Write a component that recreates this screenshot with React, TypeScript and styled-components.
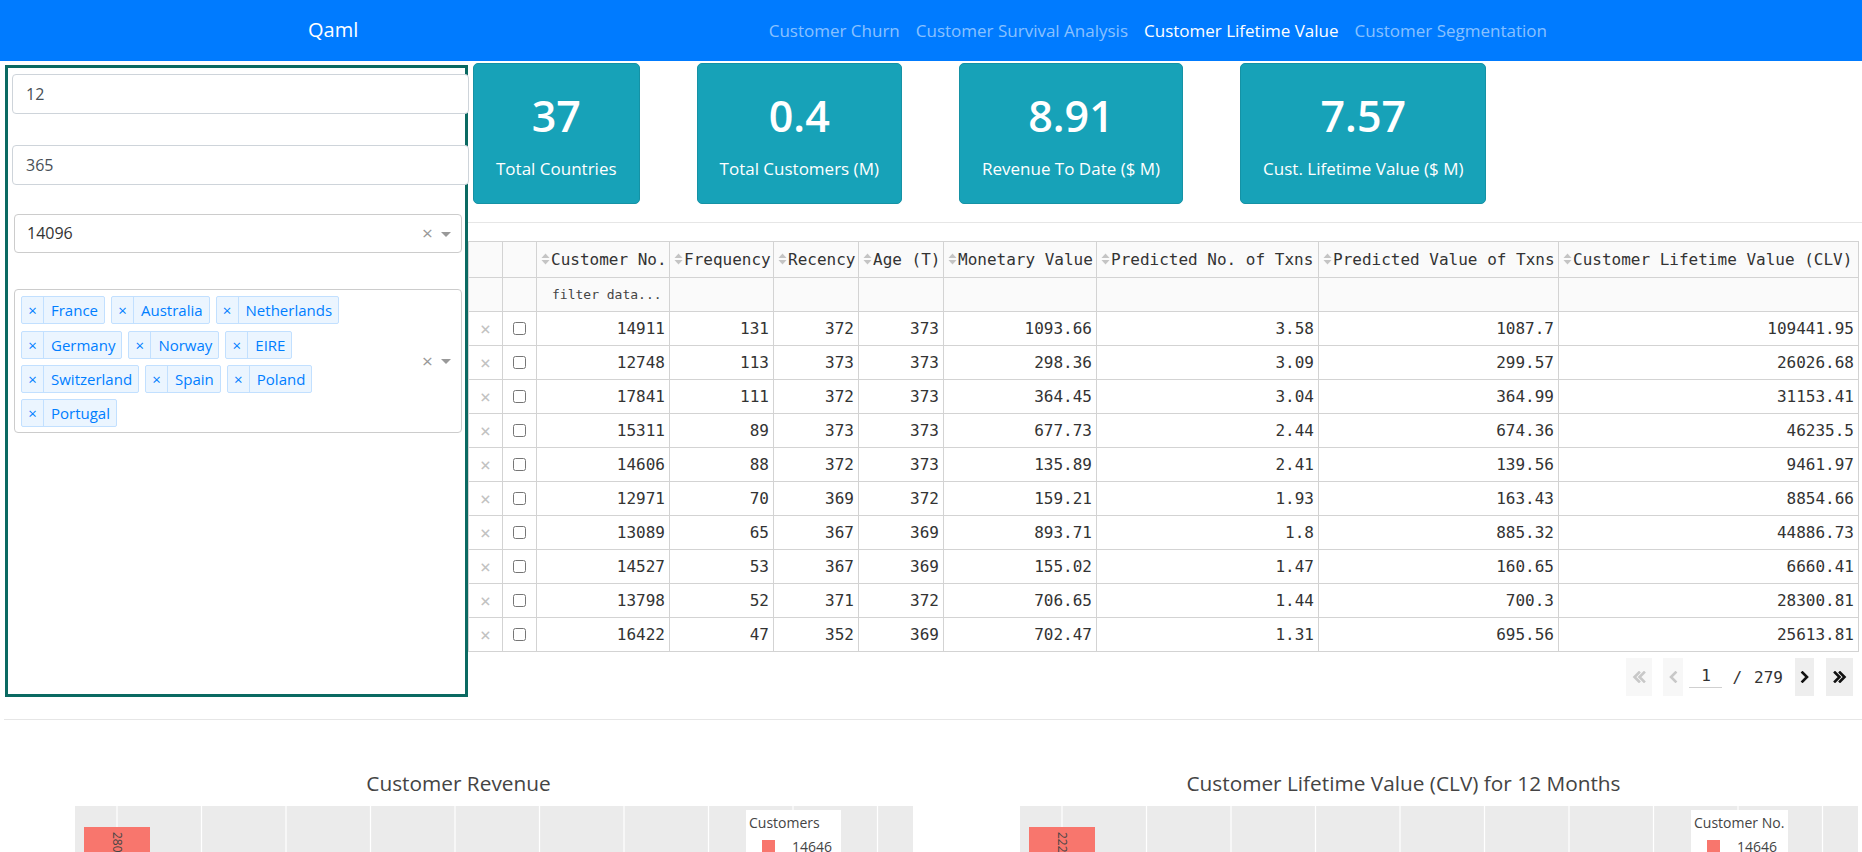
import React from 'react';
import styled, {createGlobalStyle} from 'styled-components';

const sansStack = '"Open Sans", "Noto Sans", "Liberation Sans", sans-serif';
const monoStack = '"DejaVu Sans Mono", "Liberation Mono", monospace';

const GlobalStyle = createGlobalStyle`
  html, body {
    margin: 0;
    padding: 0;
  }
  body {
    font-family: ${sansStack};
    color: #212529;
    background: #fff;
  }
  * {
    box-sizing: border-box;
  }
`;

const Page = styled.div`
  height: 100vh;
  overflow: hidden;
`;

// ---------- navbar ----------

const NavBar = styled.nav`
  height: 61px;
  background: #007bff;
  display: flex;
  align-items: center;
  justify-content: space-between;
  padding: 0 308px;
`;

const Brand = styled.div`
  color: #fff;
  font-size: 20px;
  margin-top: -2px;
`;

const NavLinks = styled.div`
  display: flex;
  margin-right: -1px;
`;

const NavLink = styled.a<{active?: boolean}>`
  padding: 0 8px;
  font-size: 17px;
  color: ${props => props.active ? '#fff' : 'rgba(255, 255, 255, 0.55)'};
  text-decoration: none;
  cursor: pointer;
`;

// ---------- top row ----------

const TopRow = styled.div`
  display: flex;
  align-items: flex-start;
`;

// inputs are a bit wider than the panel and run over its right border, as in the app
const FilterPanel = styled.aside`
  flex: 0 0 463px;
  min-width: 0;
  height: 632px;
  margin: 4px 0 0 5px;
  border: 3px solid #0b6a62;
`;

const TextInput = styled.input<{gap: number}>`
  display: block;
  width: 457px;
  height: 40px;
  margin: ${props => props.gap}px 0 0 4px;
  padding: 0 13px;
  font-family: ${sansStack};
  font-size: 16px;
  color: #495057;
  background: #fff;
  border: 1px solid #ced4da;
  border-radius: 4px;
  outline: none;
`;

const SelectBox = styled.div<{gap: number}>`
  margin: ${props => props.gap}px 0 0 6px;
  width: 448px;
  display: flex;
  align-items: center;
  border: 1px solid #ccc;
  border-radius: 4px;
  background: #fff;
  color: #333;
`;

const SingleValue = styled.div`
  flex: 1;
  height: 37px;
  line-height: 37px;
  padding-left: 12px;
  font-size: 16px;
`;

const TagArea = styled.div`
  width: 385px;
  display: flex;
  flex-wrap: wrap;
  padding-bottom: 5px;
`;

const Spacer = styled.div`
  flex: 1;
`;

const Tag = styled.div`
  display: flex;
  align-items: stretch;
  height: 28px;
  margin: 6.3px 0 0 6px;
  background: #ebf5ff;
  border: 1px solid #c2e0ff;
  border-radius: 2px;
  color: #007eff;
  font-size: 15px;
`;

const TagRemove = styled.span`
  width: 22px;
  display: flex;
  align-items: center;
  justify-content: center;
  border-right: 1px solid #c2e0ff;
  font-size: 15px;
`;

const TagLabel = styled.span`
  display: flex;
  align-items: center;
  padding: 0 6px 0 7px;
`;

const ClearZone = styled.span`
  width: 17px;
  text-align: center;
  color: #999;
  font-size: 19px;
  line-height: 1;
`;

const ArrowZone = styled.span`
  width: 25px;
  padding-right: 5px;
  display: flex;
  justify-content: center;
`;

const Caret = styled.span`
  width: 0;
  height: 0;
  border-style: solid;
  border-width: 5px 5px 2.5px;
  border-color: #999 transparent transparent;
  margin-top: 3px;
`;

// ---------- main content ----------

const Main = styled.main`
  flex: 1;
  min-width: 0;
`;

const CardRow = styled.div`
  display: flex;
  gap: 57px;
  margin: 2px 0 0 5px;
`;

const StatCard = styled.div`
  height: 141px;
  padding: 25px 22px 22px;
  background: #17a2b8;
  border: 1px solid #1592a5;
  border-radius: 5px;
  color: #fff;
  text-align: center;
`;

const StatValue = styled.div`
  font-size: 43px;
  line-height: 54px;
  font-weight: 600;
`;

const StatLabel = styled.div`
  margin-top: 14px;
  font-size: 17px;
  line-height: 24px;
  white-space: nowrap;
`;

const Divider = styled.hr<{top: number; left?: number}>`
  margin: ${props => props.top}px 0 0 ${props => props.left || 0}px;
  border: 0;
  border-top: 1px solid #e6e6e6;
`;

const DataTable = styled.table`
  margin-top: 18px;
  border-collapse: collapse;
  table-layout: fixed;
  font-family: ${monoStack};
  font-size: 16px;
  color: #333;
`;

const HeadCell = styled.th`
  height: 36px;
  padding: 0 2px 0 4px;
  background: #fafafa;
  border: 1px solid #d3d3d3;
  font-weight: normal;
  text-align: left;
  white-space: nowrap;
  overflow: hidden;
`;

const FilterCell = styled.td`
  height: 34px;
  padding: 0 0 0 15px;
  background: #fafafa;
  border: 1px solid #d3d3d3;
  font-size: 13px;
  color: #444;
  white-space: nowrap;
`;

const Cell = styled.td`
  height: 34px;
  padding: 0 4px 0 2px;
  border: 1px solid #d3d3d3;
  text-align: right;
  white-space: nowrap;
  overflow: hidden;
`;

const ControlCell = styled.td`
  height: 34px;
  padding: 0;
  border: 1px solid #d3d3d3;
  text-align: center;
  font-size: 18px;
  color: #c2c2c2;
`;

const RowCheck = styled.input`
  width: 13px;
  height: 13px;
  margin: 4px 0 0;
  vertical-align: top;
`;

const SortIcon = styled.svg`
  width: 9px;
  height: 14px;
  margin-right: 1px;
  vertical-align: -1px;
`;

const Pager = styled.div`
  display: flex;
  justify-content: flex-end;
  align-items: center;
  height: 38px;
  margin-top: 6px;
  padding-right: 9px;
  font-family: ${monoStack};
  font-size: 16px;
  color: #333;
`;

const PagerButton = styled.span<{width: number; gap: number; enabled?: boolean}>`
  width: ${props => props.width}px;
  height: 38px;
  margin-left: ${props => props.gap}px;
  display: flex;
  align-items: center;
  justify-content: center;
  background: ${props => props.enabled ? '#eeeeee' : '#f7f7f7'};
  color: ${props => props.enabled ? '#111' : '#c8c8c8'};
`;

const PageInput = styled.span`
  width: 33px;
  margin-left: 6px;
  padding-bottom: 2px;
  text-align: center;
  border-bottom: 1px solid #d0d0d0;
`;

const PageText = styled.span<{gap: number}>`
  margin-left: ${props => props.gap}px;
`;

// ---------- charts ----------

const ChartRow = styled.div`
  display: flex;
  justify-content: space-between;
`;

const ChartBox = styled.section`
  width: 917px;
`;

const ChartTitle = styled.div`
  margin-top: 50px;
  height: 26px;
  line-height: 26px;
  text-align: center;
  font-size: 20.8px;
  color: #444;
`;

const PlotArea = styled.div`
  position: relative;
  margin: 10px 0 0 75px;
  width: 838px;
  height: 420px;
`;

const Legend = styled.div<{width: number}>`
  position: absolute;
  top: 4px;
  left: 671px;
  width: ${props => props.width}px;
  height: 120px;
  background: #fff;
  padding: 3px 0 0 3px;
  font-size: 14px;
  color: #444;
`;

const LegendItem = styled.div`
  display: flex;
  align-items: center;
  margin-top: 5px;
  padding-left: 13px;
`;

const Swatch = styled.span`
  width: 13px;
  height: 14px;
  margin-right: 17px;
  background: #f8766d;
`;

const countries = ['France', 'Australia', 'Netherlands', 'Germany', 'Norway', 'EIRE', 'Switzerland', 'Spain', 'Poland', 'Portugal'];

const stats = [
  {value: '37', label: 'Total Countries'},
  {value: '0.4', label: 'Total Customers (M)'},
  {value: '8.91', label: 'Revenue To Date ($ M)'},
  {value: '7.57', label: 'Cust. Lifetime Value ($ M)'},
];

const columns = [
  {name: 'Customer No.', width: 133},
  {name: 'Frequency', width: 104},
  {name: 'Recency', width: 85},
  {name: 'Age (T)', width: 85},
  {name: 'Monetary Value', width: 153},
  {name: 'Predicted No. of Txns', width: 222},
  {name: 'Predicted Value of Txns', width: 240},
  {name: 'Customer Lifetime Value (CLV)', width: 300},
];

const rows = [
  ['14911', '131', '372', '373', '1093.66', '3.58', '1087.7', '109441.95'],
  ['12748', '113', '373', '373', '298.36', '3.09', '299.57', '26026.68'],
  ['17841', '111', '372', '373', '364.45', '3.04', '364.99', '31153.41'],
  ['15311', '89', '373', '373', '677.73', '2.44', '674.36', '46235.5'],
  ['14606', '88', '372', '373', '135.89', '2.41', '139.56', '9461.97'],
  ['12971', '70', '369', '372', '159.21', '1.93', '163.43', '8854.66'],
  ['13089', '65', '367', '369', '893.71', '1.8', '885.32', '44886.73'],
  ['14527', '53', '367', '369', '155.02', '1.47', '160.65', '6660.41'],
  ['13798', '52', '371', '372', '706.65', '1.44', '700.3', '28300.81'],
  ['16422', '47', '352', '369', '702.47', '1.31', '695.56', '25613.81'],
];

const Sort = () => (
  <SortIcon viewBox="0 0 9 14">
    <path d="M0.5 6 L4.5 1.5 L8.5 6 Z" fill="#c4c4c4" />
    <path d="M0.5 8 L4.5 12.5 L8.5 8 Z" fill="#c4c4c4" />
  </SortIcon>
);

const Chevron = ({double, dir}: {double?: boolean; dir: 'left' | 'right'}) => {
  const w = double ? 14 : 9;
  const left = double ? 'M7 1.5 L2.5 6 L7 10.5 M12 1.5 L7.5 6 L12 10.5' : 'M6.5 1.5 L2 6 L6.5 10.5';
  return (
    <svg width={w} height="12" viewBox={`0 0 ${w} 12`} style={dir === 'right' ? {transform: 'scaleX(-1)'} : undefined}>
      <path d={left} fill="none" stroke="currentColor" strokeWidth="2.6" strokeLinecap="square" />
    </svg>
  );
};

const Chart = ({title, legendTitle, legendWidth, barText}: {title: string; legendTitle: string; legendWidth: number; barText: string}) => {
  const grid = Array.from({length: 10}, (_, i) => 42 + i * 84.5);
  return (
    <ChartBox>
      <ChartTitle>{title}</ChartTitle>
      <PlotArea>
        <svg width="838" height="420" viewBox="0 0 838 420">
          <rect width="838" height="420" fill="#ebebeb" />
          {grid.map(x => <line key={x} x1={x} x2={x} y1="0" y2="420" stroke="#fff" strokeWidth="1.2" />)}
          <rect x="9" y="21" width="66" height="399" fill="#f8766d" />
          <text x="38" y="26" transform="rotate(90 38 26)" fontSize="12" fill="#444" fontFamily={sansStack}>{barText}</text>
        </svg>
        <Legend width={legendWidth}>
          <div>{legendTitle}</div>
          <LegendItem>
            <Swatch />
            14646
          </LegendItem>
        </Legend>
      </PlotArea>
    </ChartBox>
  );
};

const App: React.FC = () => (
  <Page>
    <GlobalStyle />
    <NavBar>
      <Brand>Qaml</Brand>
      <NavLinks>
        <NavLink>Customer Churn</NavLink>
        <NavLink>Customer Survival Analysis</NavLink>
        <NavLink active>Customer Lifetime Value</NavLink>
        <NavLink>Customer Segmentation</NavLink>
      </NavLinks>
    </NavBar>

    <TopRow>
      <FilterPanel>
        <TextInput gap={6} type="number" defaultValue="12" />
        <TextInput gap={31} type="number" defaultValue="365" />
        <SelectBox gap={29}>
          <SingleValue>14096</SingleValue>
          <ClearZone>×</ClearZone>
          <ArrowZone><Caret /></ArrowZone>
        </SelectBox>
        <SelectBox gap={36}>
          <TagArea>
            {countries.map(c => (
              <Tag key={c}>
                <TagRemove>×</TagRemove>
                <TagLabel>{c}</TagLabel>
              </Tag>
            ))}
          </TagArea>
          <Spacer />
          <ClearZone>×</ClearZone>
          <ArrowZone><Caret /></ArrowZone>
        </SelectBox>
      </FilterPanel>

      <Main>
        <CardRow>
          {stats.map(s => (
            <StatCard key={s.label}>
              <StatValue>{s.value}</StatValue>
              <StatLabel>{s.label}</StatLabel>
            </StatCard>
          ))}
        </CardRow>
        <Divider top={18} />

        <DataTable>
          <colgroup>
            <col style={{width: 34}} />
            <col style={{width: 34}} />
            {columns.map(c => <col key={c.name} style={{width: c.width}} />)}
          </colgroup>
          <thead>
            <tr>
              <HeadCell />
              <HeadCell />
              {columns.map(c => (
                <HeadCell key={c.name}><Sort />{c.name}</HeadCell>
              ))}
            </tr>
            <tr>
              <FilterCell />
              <FilterCell />
              {columns.map((c, i) => (
                <FilterCell key={c.name}>{i === 0 ? 'filter data...' : ''}</FilterCell>
              ))}
            </tr>
          </thead>
          <tbody>
            {rows.map(r => (
              <tr key={r[0]}>
                <ControlCell>×</ControlCell>
                <ControlCell><RowCheck type="checkbox" /></ControlCell>
                {r.map((v, i) => <Cell key={i}>{v}</Cell>)}
              </tr>
            ))}
          </tbody>
        </DataTable>

        <Pager>
          <PagerButton width={26} gap={0}><Chevron double dir="left" /></PagerButton>
          <PagerButton width={20} gap={11}><Chevron dir="left" /></PagerButton>
          <PageInput>1</PageInput>
          <PageText gap={10}>/</PageText>
          <PageText gap={12}>279</PageText>
          <PagerButton width={19} gap={12} enabled><Chevron dir="right" /></PagerButton>
          <PagerButton width={27} gap={12} enabled><Chevron double dir="right" /></PagerButton>
        </Pager>
      </Main>
    </TopRow>

    <Divider top={22} left={4} />

    <ChartRow>
      <Chart title="Customer Revenue" legendTitle="Customers" legendWidth={95} barText="280206.02" />
      <Chart title="Customer Lifetime Value (CLV) for 12 Months" legendTitle="Customer No." legendWidth={97} barText="222113.65" />
    </ChartRow>
  </Page>
);

export default App;
